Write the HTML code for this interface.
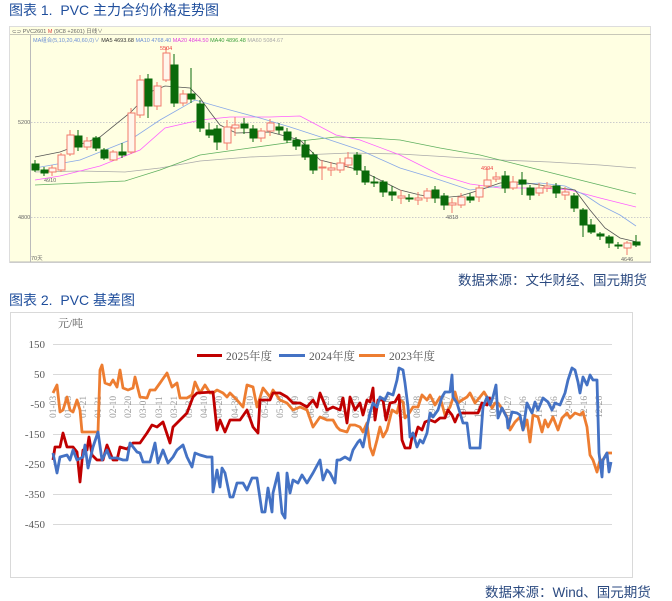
<!DOCTYPE html>
<html><head><meta charset="utf-8"><style>
html,body{margin:0;padding:0;background:#fff;width:672px;height:601px;overflow:hidden}
.t{position:absolute;font-family:"Liberation Sans","Noto Sans CJK SC",sans-serif;color:#1f4e9c;font-size:14px;white-space:nowrap}
svg{position:absolute;left:0;top:0}
</style></head><body>
<div class="t" style="left:9px;top:0px;">图表 1.&nbsp; PVC 主力合约价格走势图</div>
<div class="t" style="left:458px;top:269px;font-size:13.5px;color:#2b4a80">数据来源：文华财经、国元期货</div>
<div class="t" style="left:9px;top:290px;">图表 2.&nbsp; PVC 基差图</div>
<div class="t" style="left:485px;top:581px;font-size:13.5px;color:#2b4a80">数据来源：Wind、国元期货</div>
<svg width="672" height="601" xmlns="http://www.w3.org/2000/svg">
<rect x="9.5" y="26.5" width="641" height="236" fill="#ffffe2" stroke="#ddd"/>
<line x1="10" y1="34.5" x2="651" y2="34.5" stroke="#c8c8b8"/>
<line x1="30.5" y1="35" x2="30.5" y2="262" stroke="#bbb"/>
<line x1="10" y1="262" x2="651" y2="262" stroke="#bbb"/>
<line x1="31" y1="122.5" x2="650" y2="122.5" stroke="#ccc" stroke-dasharray="1.5 1.5"/>
<line x1="31" y1="217.5" x2="650" y2="217.5" stroke="#ccc" stroke-dasharray="1.5 1.5"/>
<g font-family="Liberation Sans,sans-serif" font-size="5.5" fill="#666">
<text x="12" y="33">⊂⊃ PVC2601 <tspan fill="#d44">M</tspan> (9C8 +2601)  日线∨</text>
<text x="33" y="42"><tspan fill="#6b8fd6">MA组合(5,10,20,40,60,0)∨</tspan> <tspan fill="#333">MA5 4693.68</tspan> <tspan fill="#6b8fd6">MA10 4768.40</tspan> <tspan fill="#e040e0">MA20 4844.50</tspan> <tspan fill="#40a040">MA40 4896.48</tspan> <tspan fill="#aaa">MA60 5084.67</tspan></text>
<text x="18" y="124">5200</text><text x="18" y="219">4800</text>
<text x="31" y="260">70天</text>
<text x="160" y="50" fill="#e44">5504</text>
<text x="44" y="182">4910</text>
<text x="481" y="170" fill="#e44">4994</text>
<text x="446" y="219">4818</text>
<text x="621" y="261">4646</text>
</g>
<g fill="none" stroke-width="0.8">
<polyline stroke="#aaa" points="35,172 80,171 125,172 160,168 200,161 250,157 300,155 350,153 400,154 450,157 500,160 550,162 600,165 636,168"/>
<polyline stroke="#60b060" points="35,185 80,183 125,181 160,170 200,155 250,148 300,141 336,137 370,138 400,140 440,148 480,155 520,165 560,175 600,185 636,194"/>
<polyline stroke="#ff60ff" points="35,180 60,176 100,166 140,150 165,128 200,120 230,117 270,117 300,116 336,135 360,140 400,155 440,175 470,184 500,188 540,188 570,190 600,198 636,207"/>
<polyline stroke="#88a8e8" points="35,168 80,160 130,140 160,120 195,100 230,110 260,118 290,127 330,140 360,150 400,168 440,180 470,190 500,186 540,183 565,186 585,195 600,205 620,215 636,226"/>
<polyline stroke="#555" points="35,157 60,152 100,137 131,112 150,92 165,86 190,88 200,98 210,112 220,125 236,133 270,132 300,140 320,160 340,165 360,170 380,180 400,190 420,195 440,198 460,196 480,190 500,183 520,182 540,185 560,188 575,190 590,210 605,228 620,238 637,242"/>
</g>
<g stroke-width="1">
<g stroke="#0a6a0a" fill="#0a6a0a">
<line x1="35" y1="160" x2="35" y2="172"/><rect x="32" y="164" width="7" height="6"/>
<line x1="44" y1="167" x2="44" y2="176"/><rect x="41" y="170" width="7" height="3"/>
<line x1="78" y1="130" x2="78" y2="151"/><rect x="75" y="136" width="7" height="11"/>
<line x1="96" y1="136" x2="96" y2="151"/><rect x="93" y="138" width="7" height="10"/>
<line x1="104" y1="148" x2="104" y2="160"/><rect x="101" y="150" width="7" height="8"/>
<line x1="122" y1="143" x2="122" y2="158"/><rect x="119" y="152" width="7" height="3"/>
<line x1="148" y1="74" x2="148" y2="118"/><rect x="145" y="79" width="7" height="27"/>
<line x1="174" y1="54" x2="174" y2="107"/><rect x="171" y="65" width="7" height="38"/>
<line x1="191" y1="68" x2="191" y2="103"/><rect x="188" y="94" width="7" height="5"/>
<line x1="200" y1="100" x2="200" y2="132"/><rect x="197" y="104" width="7" height="24"/>
<line x1="209" y1="123" x2="209" y2="138"/><rect x="206" y="130" width="7" height="5"/>
<line x1="217" y1="125" x2="217" y2="150"/><rect x="214" y="129" width="7" height="13"/>
<line x1="244" y1="118" x2="244" y2="134"/><rect x="241" y="124" width="7" height="4"/>
<line x1="253" y1="125" x2="253" y2="142"/><rect x="250" y="129" width="7" height="9"/>
<line x1="279" y1="123" x2="279" y2="134"/><rect x="276" y="127" width="7" height="3"/>
<line x1="287" y1="128" x2="287" y2="143"/><rect x="284" y="132" width="7" height="8"/>
<line x1="296" y1="137" x2="296" y2="150"/><rect x="293" y="140" width="7" height="6"/>
<line x1="305" y1="140" x2="305" y2="160"/><rect x="302" y="145" width="7" height="12"/>
<line x1="313" y1="152" x2="313" y2="174"/><rect x="310" y="155" width="7" height="15"/>
<line x1="357" y1="152" x2="357" y2="175"/><rect x="354" y="155" width="7" height="15"/>
<line x1="365" y1="166" x2="365" y2="185"/><rect x="362" y="171" width="7" height="11"/>
<line x1="374" y1="176" x2="374" y2="187"/><rect x="371" y="182" width="7" height="1"/>
<line x1="383" y1="180" x2="383" y2="197"/><rect x="380" y="182" width="7" height="10"/>
<line x1="392" y1="186" x2="392" y2="201"/><rect x="389" y="192" width="7" height="3"/>
<line x1="409" y1="194" x2="409" y2="202"/><rect x="406" y="198" width="7" height="1"/>
<line x1="435" y1="186" x2="435" y2="203"/><rect x="432" y="190" width="7" height="8"/>
<line x1="444" y1="193" x2="444" y2="210"/><rect x="441" y="196" width="7" height="9"/>
<line x1="470" y1="193" x2="470" y2="203"/><rect x="467" y="197" width="7" height="3"/>
<line x1="505" y1="171" x2="505" y2="193"/><rect x="502" y="176" width="7" height="12"/>
<line x1="522" y1="172" x2="522" y2="195"/><rect x="519" y="180" width="7" height="4"/>
<line x1="530" y1="185" x2="530" y2="200"/><rect x="527" y="188" width="7" height="7"/>
<line x1="556" y1="183" x2="556" y2="198"/><rect x="553" y="186" width="7" height="7"/>
<line x1="574" y1="193" x2="574" y2="212"/><rect x="571" y="196" width="7" height="12"/>
<line x1="583" y1="208" x2="583" y2="237"/><rect x="580" y="210" width="7" height="15"/>
<line x1="591" y1="219" x2="591" y2="234"/><rect x="588" y="225" width="7" height="7"/>
<line x1="600" y1="232" x2="600" y2="240"/><rect x="597" y="234" width="7" height="2"/>
<line x1="609" y1="235" x2="609" y2="248"/><rect x="606" y="237" width="7" height="6"/>
<line x1="618" y1="242" x2="618" y2="249"/><rect x="615" y="245" width="7" height="1"/>
<line x1="636" y1="235" x2="636" y2="247"/><rect x="633" y="242" width="7" height="3"/>
</g>
<g stroke="#f07a6a" fill="#fff6ec">
<line x1="52" y1="165" x2="52" y2="176"/><rect x="49" y="168" width="7" height="4"/>
<line x1="61" y1="153" x2="61" y2="172"/><rect x="58" y="155" width="7" height="15"/>
<line x1="70" y1="130" x2="70" y2="156"/><rect x="67" y="135" width="7" height="19"/>
<line x1="87" y1="137" x2="87" y2="150"/><rect x="84" y="141" width="7" height="6"/>
<line x1="113" y1="150" x2="113" y2="161"/><rect x="110" y="152" width="7" height="8"/>
<line x1="131" y1="108" x2="131" y2="154"/><rect x="128" y="113" width="7" height="39"/>
<line x1="140" y1="75" x2="140" y2="118"/><rect x="137" y="80" width="7" height="35"/>
<line x1="157" y1="82" x2="157" y2="110"/><rect x="154" y="86" width="7" height="20"/>
<line x1="166" y1="47" x2="166" y2="82"/><rect x="163" y="53" width="7" height="27"/>
<line x1="183" y1="90" x2="183" y2="106"/><rect x="180" y="94" width="7" height="9"/>
<line x1="227" y1="120" x2="227" y2="150"/><rect x="224" y="127" width="7" height="16"/>
<line x1="235" y1="117" x2="235" y2="136"/><rect x="232" y="125" width="7" height="3"/>
<line x1="261" y1="128" x2="261" y2="142"/><rect x="258" y="131" width="7" height="7"/>
<line x1="270" y1="119" x2="270" y2="136"/><rect x="267" y="123" width="7" height="8"/>
<line x1="322" y1="160" x2="322" y2="180"/><rect x="319" y="167" width="7" height="1"/>
<line x1="331" y1="162" x2="331" y2="176"/><rect x="328" y="168" width="7" height="2"/>
<line x1="340" y1="158" x2="340" y2="173"/><rect x="337" y="163" width="7" height="7"/>
<line x1="348" y1="152" x2="348" y2="168"/><rect x="345" y="158" width="7" height="7"/>
<line x1="401" y1="190" x2="401" y2="204"/><rect x="398" y="196" width="7" height="2"/>
<line x1="418" y1="192" x2="418" y2="205"/><rect x="415" y="198" width="7" height="2"/>
<line x1="427" y1="188" x2="427" y2="202"/><rect x="424" y="191" width="7" height="7"/>
<line x1="452" y1="198" x2="452" y2="213"/><rect x="449" y="203" width="7" height="2"/>
<line x1="461" y1="193" x2="461" y2="208"/><rect x="458" y="197" width="7" height="8"/>
<line x1="479" y1="185" x2="479" y2="202"/><rect x="476" y="188" width="7" height="9"/>
<line x1="487" y1="168" x2="487" y2="188"/><rect x="484" y="180" width="7" height="6"/>
<line x1="496" y1="172" x2="496" y2="182"/><rect x="493" y="177" width="7" height="2"/>
<line x1="513" y1="176" x2="513" y2="190"/><rect x="510" y="182" width="7" height="6"/>
<line x1="539" y1="183" x2="539" y2="196"/><rect x="536" y="188" width="7" height="5"/>
<line x1="547" y1="182" x2="547" y2="192"/><rect x="544" y="186" width="7" height="2"/>
<line x1="565" y1="187" x2="565" y2="200"/><rect x="562" y="192" width="7" height="3"/>
<line x1="627" y1="241" x2="627" y2="255"/><rect x="624" y="243" width="7" height="5"/>
</g>
</g>

<rect x="10.5" y="312.5" width="622" height="265" fill="#fff" stroke="#d9d9d9"/>
<g stroke="#d9d9d9" stroke-width="1">
<line x1="53" y1="344.5" x2="612" y2="344.5"/><line x1="53" y1="374.5" x2="612" y2="374.5"/>
<line x1="53" y1="404.5" x2="612" y2="404.5"/><line x1="53" y1="434.5" x2="612" y2="434.5"/>
<line x1="53" y1="464.5" x2="612" y2="464.5"/><line x1="53" y1="494.5" x2="612" y2="494.5"/>
<line x1="53" y1="524.5" x2="612" y2="524.5"/>
</g>
<g font-family="Liberation Serif,Noto Serif CJK SC,serif" font-size="11" fill="#595959" text-anchor="end">
<text x="45" y="348">150</text><text x="45" y="378">50</text><text x="45" y="408">-50</text>
<text x="45" y="438">-150</text><text x="45" y="468">-250</text><text x="45" y="498">-350</text><text x="45" y="528">-450</text>
<text x="58" y="327" text-anchor="start">元/吨</text>
</g>
<g font-family="Liberation Serif,serif" font-size="9.5" fill="#9a9a9a">
<text transform="translate(56,418) rotate(-90)">01-03</text>
<text transform="translate(71,418) rotate(-90)">01-13</text>
<text transform="translate(86,418) rotate(-90)">01-21</text>
<text transform="translate(101,418) rotate(-90)">01-31</text>
<text transform="translate(116,418) rotate(-90)">02-10</text>
<text transform="translate(131,418) rotate(-90)">02-20</text>
<text transform="translate(146,418) rotate(-90)">03-01</text>
<text transform="translate(162,418) rotate(-90)">03-11</text>
<text transform="translate(177,418) rotate(-90)">03-21</text>
<text transform="translate(192,418) rotate(-90)">03-31</text>
<text transform="translate(207,418) rotate(-90)">04-10</text>
<text transform="translate(222,418) rotate(-90)">04-20</text>
<text transform="translate(238,418) rotate(-90)">04-30</text>
<text transform="translate(253,418) rotate(-90)">05-10</text>
<text transform="translate(268,418) rotate(-90)">05-20</text>
<text transform="translate(283,418) rotate(-90)">05-30</text>
<text transform="translate(298,418) rotate(-90)">06-09</text>
<text transform="translate(314,418) rotate(-90)">06-19</text>
<text transform="translate(329,418) rotate(-90)">06-29</text>
<text transform="translate(344,418) rotate(-90)">07-09</text>
<text transform="translate(359,418) rotate(-90)">07-19</text>
<text transform="translate(374,418) rotate(-90)">07-29</text>
<text transform="translate(390,418) rotate(-90)">08-08</text>
<text transform="translate(405,418) rotate(-90)">08-18</text>
<text transform="translate(420,418) rotate(-90)">08-28</text>
<text transform="translate(435,418) rotate(-90)">09-07</text>
<text transform="translate(450,418) rotate(-90)">09-17</text>
<text transform="translate(466,418) rotate(-90)">09-27</text>
<text transform="translate(481,418) rotate(-90)">10-07</text>
<text transform="translate(496,418) rotate(-90)">10-17</text>
<text transform="translate(511,418) rotate(-90)">10-27</text>
<text transform="translate(526,418) rotate(-90)">11-06</text>
<text transform="translate(542,418) rotate(-90)">11-16</text>
<text transform="translate(557,418) rotate(-90)">11-26</text>
<text transform="translate(572,418) rotate(-90)">12-06</text>
<text transform="translate(587,418) rotate(-90)">12-16</text>
<text transform="translate(602,418) rotate(-90)">12-26</text>
</g>
<g fill="none" stroke-width="2.8" stroke-linejoin="round">
<polyline stroke="#ed7d31" points="53,393 57,385 60,412 63,410 67,397 70,410 73,412 77,400 80,410 82,432 95,432 98,432 100,370 102,365 105,383 110,385 113,380 117,387 120,370 123,388 128,390 133,388 135,377 140,397 147,398 150,390 155,390 160,383 167,373 172,387 177,383 180,398 187,398 192,395 195,382 200,393 205,385 210,393 213,393 217,390 223,393 227,397 230,393 237,400 243,407 247,385 253,387 257,407 263,388 267,393 270,397 273,390 280,400 287,403 293,410 300,407 307,410 313,427 320,417 327,420 333,420 337,427 340,430 347,432 350,425 355,425 360,427 363,432 367,423 370,447 373,455 377,440 380,427 383,437 387,430 392,410 397,413 400,400 403,402 405,418 408,415 413,407 418,407 422,395 427,400 430,395 435,405 440,397 445,415 450,407 455,392 458,403 462,400 467,397 470,393 475,403 480,397 484,392 487,397 492,408 495,403 498,403 503,410 507,417 510,430 515,422 520,417 523,430 527,420 530,442 533,415 538,417 542,432 545,420 548,427 553,417 558,430 562,418 567,413 570,418 575,413 580,415 583,412 587,427 590,455 593,460 597,472 600,460 603,460 607,453 610,453 612,453"/>
<polyline stroke="#c00000" points="53,460 55,447 60,447 63,433 67,447 73,447 77,452 80,482 83,450 87,450 89,437 92,455 97,460 103,460 107,445 113,460 117,460 120,447 127,449 133,443 140,443 147,433 152,425 157,427 163,422 170,443 173,427 180,420 187,413 193,397 197,393 213,392 217,430 220,420 225,432 230,420 240,420 247,410 253,427 258,433 260,400 270,400 273,393 280,393 287,397 293,403 300,403 307,407 313,400 317,407 320,393 327,410 333,407 340,410 343,398 347,423 350,397 355,410 360,403 363,415 367,400 370,402 373,388 375,420 378,400 383,400 386,420 390,403 395,402 399,395 402,440 405,448 410,448 412,437 415,437 418,427 422,430 425,422 430,420 435,422 440,418 445,418 448,410 452,415 455,422 458,415 462,413 468,413 473,413 478,413 482,403 487,405 490,397"/>
<polyline stroke="#4472c4" points="53,453 57,473 60,457 67,455 70,460 73,450 77,460 83,457 85,445 88,468 93,447 98,432 102,460 107,450 110,458 117,458 123,460 127,460 130,443 137,452 140,453 143,462 150,462 155,443 158,463 163,450 168,463 173,457 177,450 183,445 187,457 192,467 195,453 200,455 207,457 212,457 213,492 217,470 220,487 222,468 225,473 230,497 233,497 237,483 243,483 247,490 252,478 257,478 262,512 265,512 268,488 272,512 273,493 278,473 282,513 285,518 287,473 290,493 293,480 298,483 302,475 307,483 313,473 320,460 323,480 327,470 330,473 335,483 337,460 340,460 345,457 350,460 353,450 358,442 360,440 363,447 367,427 370,413 373,403 377,407 380,397 385,400 388,393 393,395 397,380 399,368 403,370 405,383 408,407 410,437 413,433 417,447 420,440 423,443 427,433 430,413 433,417 438,410 442,397 445,392 450,392 452,375 453,397 457,403 460,413 463,423 467,423 470,448 480,448 483,407 487,397 490,405 493,397 496,385 498,418 502,408 507,418 508,428 512,412 517,413 520,415 523,430 527,403 532,413 535,402 538,410 543,398 548,402 552,410 555,403 560,405 565,393 568,380 572,368 575,370 578,382 580,393 583,377 587,385 590,375 593,380 597,380 599,453 602,477 603,460 607,453 609,472 611,462"/>
</g>
<g font-family="Liberation Serif,Noto Serif CJK SC,serif" font-size="11.5" fill="#595959">
<line x1="197" y1="355.5" x2="222" y2="355.5" stroke="#c00000" stroke-width="3"/><text x="226" y="360">2025年度</text>
<line x1="279" y1="355.5" x2="305" y2="355.5" stroke="#4472c4" stroke-width="3"/><text x="309" y="360">2024年度</text>
<line x1="359" y1="355.5" x2="385" y2="355.5" stroke="#ed7d31" stroke-width="3"/><text x="389" y="360">2023年度</text>
</g>
</svg>
</body></html>
